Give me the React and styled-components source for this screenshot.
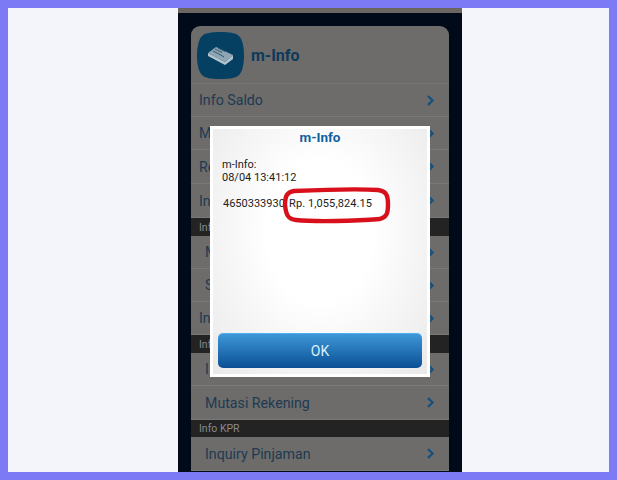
import React from "react";
import styled, { createGlobalStyle } from "styled-components";

const GlobalStyle = createGlobalStyle`
  html, body {
    margin: 0;
    padding: 0;
    background: #f3f5fb;
  }
  * {
    box-sizing: border-box;
  }
`;

const Frame = styled.div`
  width: 617px;
  height: 480px;
  border: 8px solid #7d7af5;
  background: #f3f5fb;
  display: flex;
  justify-content: flex-start;
  overflow: hidden;
  font-family: Roboto, "Liberation Sans", sans-serif;
`;

const Phone = styled.div`
  position: relative;
  width: 284px;
  height: 464px;
  margin-left: 170px;
  background: #010a18;
  border-top: 5px solid #6b6660;
  padding: 13px 13px 0;
`;

const Panel = styled.div`
  background: #6d6c6a;
  border-radius: 9px 9px 0 0;
  height: 445px;
  overflow: hidden;
`;

const Header = styled.div`
  height: 58px;
  padding: 6px 6px 0;
  display: flex;
  align-items: flex-start;
  gap: 7px;
  border-bottom: 1px solid #767573;
`;

const Logo = styled.svg`
  width: 47px;
  height: 47px;
  flex-shrink: 0;
`;

const AppName = styled.div`
  margin-top: 14px;
  font-size: 16px;
  font-weight: 700;
  color: #0d3a5c;
`;

const Row = styled.div`
  height: ${p => p.$height || 33}px;
  padding: 0 14px 0 ${p => (p.$inset ? 14 : 8)}px;
  display: flex;
  align-items: center;
  justify-content: space-between;
  font-size: 14.2px;
  color: #1e3a52;
  border-bottom: 1px solid #7a7977;
`;

const Section = styled.div`
  height: ${p => p.$height || 18}px;
  padding-left: 8px;
  display: flex;
  align-items: center;
  background: #232323;
  color: #8a8a8a;
  font-size: 10.5px;
`;

const Chevron = styled.svg`
  width: 9px;
  height: 11px;
  fill: none;
  stroke: #15517f;
  stroke-width: 2.4;
`;

const Dialog = styled.div`
  position: absolute;
  left: 32px;
  top: 113px;
  width: 220px;
  height: 251px;
  border: 3px solid #ffffff;
  background: radial-gradient(ellipse at 50% 42%, #ffffff 35%, #e9e9e9 100%);
  display: flex;
  flex-direction: column;
`;

const DialogTitle = styled.div`
  text-align: center;
  font-size: 13.5px;
  line-height: 16px;
  font-weight: 700;
  color: #12619f;
`;

const Message = styled.div`
  margin: 13px 0 0 9px;
  font-size: 11px;
  line-height: 13px;
  color: #222222;
`;

const Balance = styled.div`
  position: relative;
  margin: 13px 0 0 10px;
  font-size: 11px;
  line-height: 13px;
  color: #222222;
  display: flex;
  flex: 1;
  align-items: flex-start;
`;

const Account = styled.span`
  width: 66px;
  overflow: hidden;
  white-space: nowrap;
`;

const Amount = styled.span`
  letter-spacing: 0.1px;
`;

const Mark = styled.svg`
  position: absolute;
  left: 59px;
  top: -10px;
  width: 109px;
  height: 37px;
  fill: none;
  stroke: #d8101c;
  stroke-width: 4.4;
`;

const OkButton = styled.button`
  margin: 0 5px 6px;
  height: 35px;
  border: none;
  border-top: 1px solid #52aee6;
  border-radius: 5px;
  background: linear-gradient(#3d97d8, #0a4f94);
  color: #d8f0ff;
  font-family: inherit;
  font-size: 14px;
`;

const Arrow = () => (
  <Chevron viewBox="0 0 9 11">
    <path d="M2 1l4.5 4.5L2 10" />
  </Chevron>
);

const App = () => {
  return (
    <>
      <GlobalStyle />
      <Frame>
        <Phone>
          <Panel>
            <Header>
              <Logo viewBox="0 0 47 47">
                <path
                  d="M23.5 0C33 0 39 1 42 4c3 3 5 10 5 19.5S45 40 42 43c-3 3-9 4-18.5 4S8 46 5 43C2 40 0 33 0 23.5S2 7 5 4C8 1 14 0 23.5 0z"
                  fill="#053f62"
                />
                <path d="M11 21l8-6 17 8-8 7z" fill="#8ea6b4" />
                <path d="M11 21v3l17 9 8-6v-4l-8 7z" fill="#b3c2cb" />
                <path
                  d="M16 19l6 3M18 17l7 3.5M21 16l7 3.5M22 22l5 3"
                  stroke="#2e5670"
                  strokeWidth="1"
                  fill="none"
                />
              </Logo>
              <AppName>m-Info</AppName>
            </Header>
            <Row>Info Saldo<Arrow /></Row>
            <Row>Mutasi<Arrow /></Row>
            <Row $height={34}>Re<Arrow /></Row>
            <Row $height={34}>In<Arrow /></Row>
            <Section>Info</Section>
            <Row $inset>M<Arrow /></Row>
            <Row $inset>S<Arrow /></Row>
            <Row>In<Arrow /></Row>
            <Section>Info</Section>
            <Row $inset>I<Arrow /></Row>
            <Row $inset $height={34}>Mutasi Rekening<Arrow /></Row>
            <Section $height={17}>Info KPR</Section>
            <Row $inset $height={34}>Inquiry Pinjaman<Arrow /></Row>
          </Panel>
          <Dialog>
            <DialogTitle>m-Info</DialogTitle>
            <Message>
              m-Info:
              <br />
              08/04 13:41:12
            </Message>
            <Balance>
              <Account>4650333930</Account>
              <Amount>Rp. 1,055,824.15</Amount>
              <Mark viewBox="0 0 109 37">
                <path d="M12 4C35 3 80 2 96 3c8 1 10 5 10 14 0 9-1 13-8 15-25 2-65 3-84 1C6 32 4 28 3 18 3 9 5 5 12 4z" />
              </Mark>
            </Balance>
            <OkButton>OK</OkButton>
          </Dialog>
        </Phone>
      </Frame>
    </>
  );
};

export default App;
